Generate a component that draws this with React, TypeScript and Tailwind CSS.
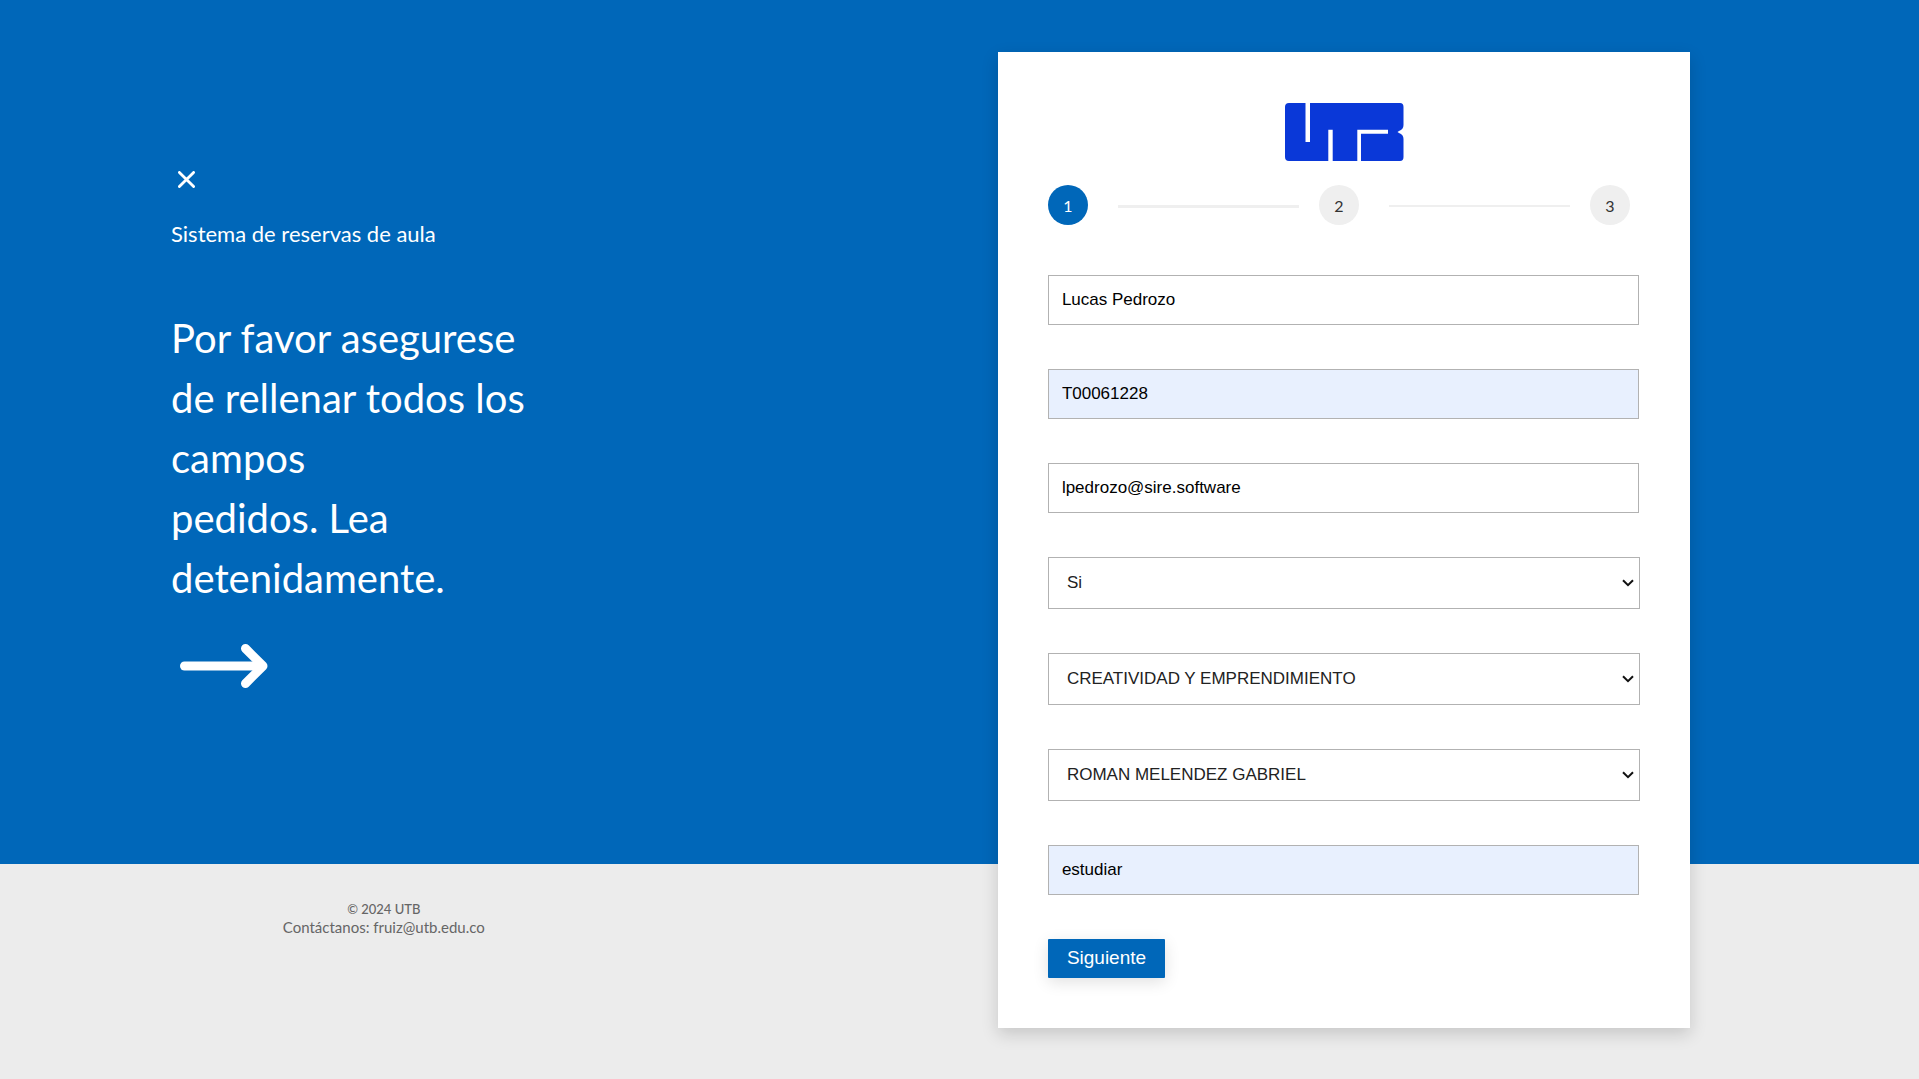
import React from "react";

type Field =
  | { kind: "text" | "email"; id: string; label: string; value: string; filled?: boolean }
  | { kind: "select"; id: string; label: string; value: string };

const fields: Field[] = [
  { kind: "text", id: "nombre", label: "Nombre", value: "Lucas Pedrozo" },
  { kind: "text", id: "codigo", label: "Código", value: "T00061228", filled: true },
  { kind: "email", id: "correo", label: "Correo", value: "lpedrozo@sire.software" },
  { kind: "select", id: "confirmacion", label: "Confirmación", value: "Si" },
  { kind: "select", id: "curso", label: "Curso", value: "CREATIVIDAD Y EMPRENDIMIENTO" },
  { kind: "select", id: "docente", label: "Docente", value: "ROMAN MELENDEZ GABRIEL" },
  { kind: "text", id: "motivo", label: "Motivo", value: "estudiar", filled: true },
];

function Logo() {
  return (
    <svg viewBox="-1 0 120 58" className="mx-auto block h-[58px] w-[120px]" role="img" aria-label="UTB">
      <path
        fill="#0a38d8"
        d="M4 0H20.5V39H25V0H115Q118.500 0 118.500 4V22Q118.500 26.5 114 28L112.500 29L114 30Q118.500 31.500 118.500 36V54Q118.500 58 115 58H76V30.700H103V26.700H72.300V58H47.700V26.700H43.300V58H4Q0 58 0 54V4Q0 0 4 0Z"
      />
    </svg>
  );
}

function CloseIcon() {
  return (
    <svg viewBox="0 0 17 17" className="block size-[17px]" fill="none" stroke="currentColor" strokeWidth="2.800" strokeLinecap="round">
      <path d="M1.400 1.400L15.600 15.600M15.600 1.400L1.400 15.600" />
    </svg>
  );
}

function ArrowIcon() {
  return (
    <svg viewBox="0 0 88 44" className="block h-[44px] w-[88px]" aria-hidden="true">
      <g fill="none" stroke="#fff" strokeWidth="9" strokeLinecap="round" strokeLinejoin="round">
        <path d="M4.500 22H80" />
        <path d="M65.500 4.500L83 22L65.500 39.500" />
      </g>
    </svg>
  );
}

function Chevron() {
  return (
    <svg
      viewBox="0 0 12 8"
      className="pointer-events-none absolute top-[22px] right-[6px] h-2 w-3"
      fill="none"
      stroke="#111"
      strokeWidth="2"
      aria-hidden="true"
    >
      <path d="M1 1.200L6 6.200L11 1.200" />
    </svg>
  );
}

function Steps() {
  const circle = "flex size-10 shrink-0 items-center justify-center rounded-full pt-[2px] text-[16px]";
  return (
    <ol className="mt-6 flex pr-[10px] font-['Lato',sans-serif] leading-6">
      <li className={`${circle} bg-[#0067b9] text-white`}>1</li>
      <li aria-hidden="true" className="mt-5 mr-5 ml-[30px] h-[3px] flex-1 bg-[#efefef]" />
      <li className={`${circle} bg-[#efefef] text-[#333]`}>2</li>
      <li aria-hidden="true" className="mt-5 mr-5 ml-[30px] h-[2px] flex-1 bg-[#efefef]" />
      <li className={`${circle} bg-[#efefef] text-[#333]`}>3</li>
    </ol>
  );
}

function FormField({ field }: { field: Field }) {
  if (field.kind === "select") {
    return (
      <div className="relative">
        <select
          id={field.id}
          aria-label={field.label}
          defaultValue={field.value}
          className="block h-[52px] w-full appearance-none border border-[#b2b2b2] bg-white pr-8 pl-[18px] text-[17px] leading-6 text-[#222]"
        >
          <option>{field.value}</option>
        </select>
        <Chevron />
      </div>
    );
  }
  return (
    <div className="pr-px">
      <input
        id={field.id}
        type={field.kind}
        aria-label={field.label}
        defaultValue={field.value}
        className={`block h-[50px] w-full border border-[#b2b2b2] px-[13px] text-[17px] leading-6 text-black ${
          field.filled ? "bg-[#e8f0fe]" : "bg-white"
        }`}
      />
    </div>
  );
}

export default function App() {
  return (
    <div className="min-h-screen bg-[#ececec] font-['Liberation_Sans',Arial,sans-serif]">
      <main className="flex h-[864px] items-start bg-[#0067b9]">
        <section className="w-[52%] pt-[171px] pl-[171px] font-['Lato',sans-serif] text-white">
          <button type="button" aria-label="Cerrar" className="ml-[7px] block">
            <CloseIcon />
          </button>
          <p className="mt-7 text-[22px] leading-9">Sistema de reservas de aula</p>
          <h1 className="mt-14 w-[360px] text-[40px] leading-[60px]">
            Por favor asegurese de rellenar todos los campos
            <br />
            pedidos. Lea detenidamente.
          </h1>
          <div className="mt-9 ml-[9px]">
            <ArrowIcon />
          </div>
        </section>

        <form
          className="relative mt-[52px] w-[692px] bg-white px-[50px] pt-[51px] pb-[50px] shadow-[0_6px_16px_rgba(0,0,0,0.16)]"
          onSubmit={(e: React.FormEvent) => e.preventDefault()}
        >
          <Logo />
          <Steps />
          <div className="mt-[50px] flex flex-col gap-[44px]">
            {fields.map((field) => (
              <FormField key={field.id} field={field} />
            ))}
          </div>
          <button
            type="submit"
            className="mt-[44px] block h-[39px] rounded-[1px] bg-[#0067b9] px-[19px] pb-[2px] text-[19px] leading-6 text-white shadow-[0_4px_16px_rgba(0,0,0,0.12)]"
          >
            Siguiente
          </button>
        </form>
      </main>

      <footer className="w-[40%] pt-9 text-center font-['Lato',sans-serif] leading-[18px] text-[#666]">
        <p className="text-[13px] font-medium">© 2024 UTB</p>
        <p className="text-[15px]">
          Contáctanos: <a href="mailto:fruiz@utb.edu.co">fruiz@utb.edu.co</a>
        </p>
      </footer>
    </div>
  );
}
